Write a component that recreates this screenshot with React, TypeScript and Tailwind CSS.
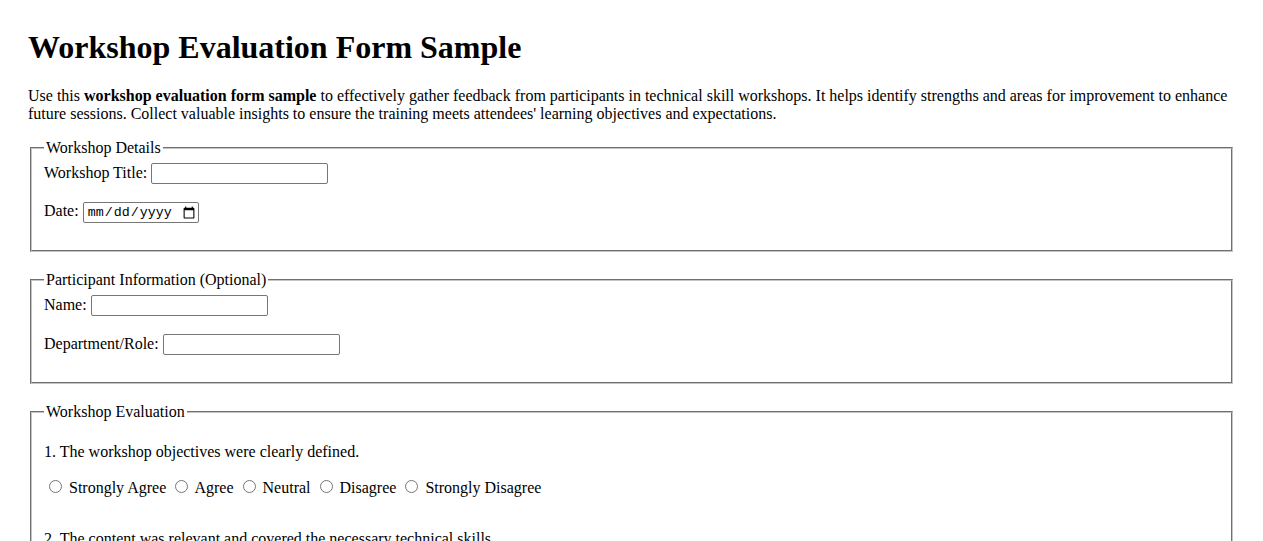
import React from "react";

// Preguntas de la evaluación (sólo se ven las dos primeras en pantalla)
const questions = [
  "1. The workshop objectives were clearly defined.",
  "2. The content was relevant and covered the necessary technical skills.",
  "3. The instructor was knowledgeable and engaging.",
  "4. The hands-on activities helped reinforce the concepts.",
  "5. The pace of the workshop was appropriate.",
];

const options = [
  "Strongly Agree",
  "Agree",
  "Neutral",
  "Disagree",
  "Strongly Disagree",
];

function Section({ title, children }: { title: string; children: React.ReactNode }) {
  return (
    <fieldset className="mx-[2px] mb-[19px] border-2 border-[#c4c4c4] [border-style:groove] px-3 pt-[5.6px] pb-[10px]">
      <legend className="px-[2px]">{title}</legend>
      {children}
    </fieldset>
  );
}

function TextField({ label, id, last }: { label: string; id: string; last?: boolean }) {
  return (
    <div className={last ? "mb-[17px]" : "mb-[18px]"}>
      <label htmlFor={id}>{label}</label>{" "}
      <input
        id={id}
        type="text"
        className="h-[21px] w-[177px] rounded-[2px] border border-[#767676] bg-white px-[3px] align-baseline font-['Liberation_Sans',sans-serif] text-[13.33px]"
      />
    </div>
  );
}

export default function App() {
  return (
    <div className="min-h-screen bg-white px-7 pt-[29px] pb-7 font-['Liberation_Serif',serif] text-base leading-[normal] text-black">
      <h1 className="mb-[21.44px] text-[32px] font-bold">Workshop Evaluation Form Sample</h1>
      <p className="mb-4">
        Use this <strong>workshop evaluation form sample</strong> to effectively gather feedback
        from participants in technical skill workshops. It helps identify strengths and areas for
        improvement to enhance future sessions. Collect valuable insights to ensure the training
        meets attendees' learning objectives and expectations.
      </p>

      <form>
        <Section title="Workshop Details">
          <TextField label="Workshop Title:" id="title" />
          <div className="mb-[17px]">
            <label htmlFor="date">Date:</label>{" "}
            <input
              id="date"
              type="date"
              className="h-[21px] w-[116px] rounded-[2px] border border-[#767676] bg-white pl-[3px] align-baseline font-['Liberation_Mono',monospace] text-[13.33px]"
            />
          </div>
        </Section>

        <Section title="Participant Information (Optional)">
          <TextField label="Name:" id="name" />
          <TextField label="Department/Role:" id="role" last />
        </Section>

        <Section title="Workshop Evaluation">
          {questions.map((q, i) => (
            <div key={q} className="pb-4">
              <p className="mt-[17px] mb-4">{q}</p>
              <div>
                {options.map((opt) => (
                  <React.Fragment key={opt}>
                    <label>
                      <input type="radio" name={`q${i}`} value={opt} className="mt-[3px] mr-[3px] ml-[5px]" /> {opt}
                    </label>{" "}
                  </React.Fragment>
                ))}
              </div>
            </div>
          ))}
        </Section>
      </form>
    </div>
  );
}
